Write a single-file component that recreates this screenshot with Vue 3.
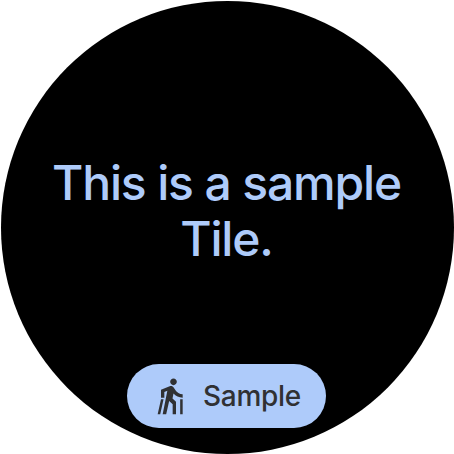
<script setup>
const lines = ['This is a sample', 'Tile.']
const label = 'Sample'
</script>

<template>
  <main class="watch">
    <section class="tile">
      <h1 class="message">
        <span v-for="line in lines" :key="line" class="line">{{ line }}</span>
      </h1>
      <button class="chip" type="button">
        <svg class="icon" viewBox="0 0 24 24" aria-hidden="true">
          <path d="M19 23h-1.5v-9H19v9zM7.53 14H6l-2 9h1.53l2-9zm5.97-8.5c1.1 0 2-.9 2-2s-.9-2-2-2-2 .9-2 2 .9 2 2 2zM9.8 8.9L7 23h2.1l1.8-8 2.1 2v6h2v-7.5l-2.1-2 .6-3C14.8 12 16.8 13 19 13v-2c-1.9 0-3.5-1-4.3-2.4l-1-1.6c-.4-.6-1-1-1.7-1-.3 0-.5.1-.8.1L6 8.3V13h2V9.6l1.8-.7z" />
        </svg>
        <span class="label">{{ label }}</span>
      </button>
    </section>
  </main>
</template>

<style>
body {
  background: #fff;
}
</style>

<style scoped>
.watch {
  box-sizing: border-box;
  width: 454px;
  height: 454px;
  padding: 1px 0 0 1px;
  overflow: hidden;
  font-family: Inter, sans-serif;
}
.tile {
  box-sizing: border-box;
  display: flex;
  flex-direction: column;
  align-items: center;
  width: 453px;
  height: 453px;
  padding: 154px 2px 0 0;
  border-radius: 50%;
  background: #000;
}
.message {
  display: flex;
  flex-direction: column;
  align-items: center;
  margin: 0;
  color: #aecbfa;
  font-size: 48px;
  font-weight: 500;
  line-height: 56px;
  letter-spacing: -1.15px;
  white-space: nowrap;
}
.chip {
  box-sizing: border-box;
  display: flex;
  align-items: center;
  width: 199px;
  height: 64px;
  margin: 97px 0 0;
  padding: 0 0 0 24px;
  border: 0;
  border-radius: 32px;
  background: #aecbfa;
  color: #303133;
  font-family: inherit;
}
.icon {
  width: 40px;
  height: 40px;
  fill: currentColor;
}
.label {
  margin-left: 12px;
  font-size: 28px;
  font-weight: 500;
  line-height: 36px;
  letter-spacing: -0.3px;
}
</style>
